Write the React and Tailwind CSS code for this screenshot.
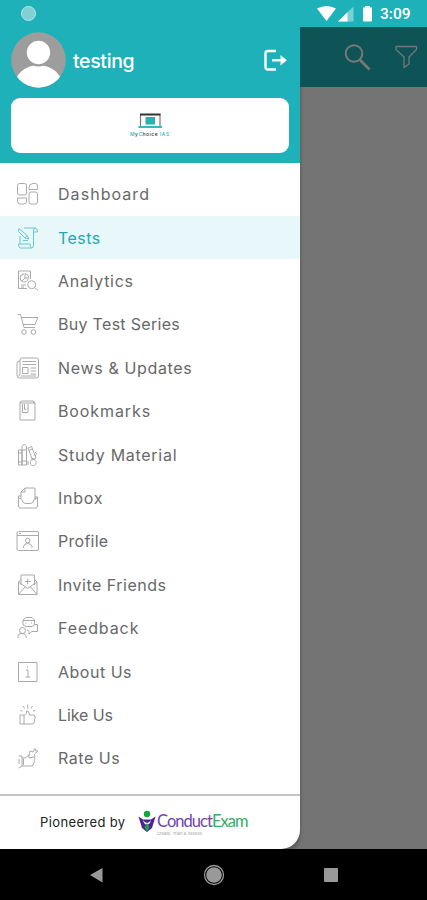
import React from "react";

const icons = {
  dashboard: (
    <>
      <rect x="1.5" y="1.5" width="9" height="11.5" rx="2" />
      <path d="M13 7.5V5.5Q13 1.5 17 1.5H19.5Q21.500 1.5 21.5 4V7.5Z" />
      <rect x="13" y="10" width="8.5" height="12" rx="2" />
      <path d="M1.5 16H10.5V19Q10.5 22 7.5 22H4Q1.5 22 1.5 19Z" />
    </>
  ),
  tests: (
    <>
      <path d="M8 2H19Q21.5 2 21.5 6H17.5V19.5Q17.5 22 15 22H4.5Q2.5 22 2.5 18H14Q14 22 15.5 22M17.5 6V4Q17.5 2 19.5 2" />
      <path d="M3 2.5L11 9.5L13 13L9 12L2.5 5.5ZM4 18V10M7 14.5H12M11 9.5L9 12" />
    </>
  ),
  analytics: (
    <>
      <path d="M11 19.5H2.5V2H14.5V10M5 16H10M5 18H8" />
      <path d="M8 5A4 4 0 1 0 12 10M9 4.5V9H13Q12.5 5 9 4.5M6 12L9 9" />
      <circle cx="15.7" cy="15.7" r="4" />
      <path d="M18.7 18.7L22 21.5" />
    </>
  ),
  cart: (
    <>
      <path d="M1.5 2.5H4.5L8 15.5H19M5.3 5.5H22L19 12.5H7.2" />
      <circle cx="8" cy="20" r="2.3" />
      <circle cx="17.5" cy="20" r="2.3" />
    </>
  ),
  news: (
    <>
      <path d="M4 5V4Q4 2 6 2H20.5Q22.5 2 22.5 4V20Q22.5 22 20.5 22H3.5Q1 22 1 19V7Q1 5 4 5V18Q4 20 2.5 20" />
      <path d="M6.5 5.5H20M6.5 8.5H20M6.5 11.5H12V17.5H6.5ZM14.5 12H20M14.5 15H20M14.5 18H20M5 20H20" />
    </>
  ),
  bookmark: (
    <>
      <path d="M4 4Q4 2 6 2H17.5L19 4V21H4ZM4 4H19M17.5 2V4" />
      <path d="M6.500 5V13.500H12V5M8.500 5V10.500H10" />
    </>
  ),
  study: (
    <>
      <path d="M2.5 7H6V22H2.5ZM6 3.5Q8 0 10.5 3V22H6ZM2.5 10H6M2.5 19H6M6 7H10.5M6 18H10.5" />
      <path d="M12 5L15.5 3.5L20 15L16.5 17ZM13 7.5L16.5 6" />
      <path d="M19 9Q22 10 19 13M14.5 18.5A3 3 0 1 0 20 18.5L17 15ZM12 18V22" />
    </>
  ),
  inbox: (
    <>
      <path d="M5 12V6L9 2H19V14M5 6H9V2M5 10H2.5V20Q2.5 22 4.5 22H19.5Q21.5 22 21.5 20V11H19" />
      <path d="M2.5 12Q6 12 6.5 15Q7 17.5 10 17.5H14Q17 17.5 17.5 15Q18 12 21.5 12" />
    </>
  ),
  profile: (
    <>
      <rect x="1" y="2.5" width="21.5" height="19" rx="1.5" />
      <path d="M1 6.5H22.5M3 4.5H5" />
      <circle cx="11.7" cy="11.5" r="2.3" />
      <path d="M7.5 19V17.5Q8 14.5 11.7 14.5Q15.5 14.5 16 17.5V19" />
    </>
  ),
  invite: (
    <>
      <path d="M5 12V2H18.5V12M5 6.5L2.5 9V21.5H21V9L18.5 6.5M2.5 9L11.7 15.5L21 9M2.5 21.5L9 14M21 21.5L14.5 14" />
      <path d="M9 8.5H14.5M11.7 5.8V11.2" />
    </>
  ),
  feedback: (
    <>
      <path d="M7 9V4L10 1.5H16L18.5 4V9L16 10.5H10L7 9M7 4.5H18.5M10 6.5V7.5M15.5 6.5V7.5" />
      <path d="M18.5 8.5H21.5V15.5H16L13 18V15.5L11 14" />
      <circle cx="6.5" cy="14.5" r="3" />
      <path d="M2 22V20Q2 17.5 6 17.5Q10 17.5 10.5 22" />
    </>
  ),
  about: (
    <>
      <rect x="2.5" y="2.5" width="18.5" height="19" />
      <path d="M11.700 6V7.500M10 10H12V17M9.500 17H14.200" />
    </>
  ),
  like: (
    <>
      <path d="M4 12H8V21H4ZM8 12.5L10.5 10V8Q13 7 13.5 12H18Q19.5 12.5 19 15L18 20Q17.5 21 16 21H8" />
      <path d="M11.700 1.500V5.500M7 3L8.500 5.500M16.500 3L15 5.500M4.500 7.500L6.500 8M19 7.500L17 8" />
    </>
  ),
  rate: (
    <>
      <path d="M2.5 10H6V20L2.5 22M6 12H9L13 9V12L18 11Q20 12 18 14Q19.5 15.5 17.5 17Q18 20 15 20H6" />
      <path d="M13 9L14 5L17 6L19 2.5L20 5L22 5L18.5 8L19 11M3 13V18M7.5 13V19" />
    </>
  ),
};

const items = [
  { label: "Dashboard", icon: "dashboard", tracking: "tracking-[1.05px]" },
  { label: "Tests", icon: "tests", tracking: "tracking-[0.47px]", active: true },
  { label: "Analytics", icon: "analytics", tracking: "tracking-[0.7px]" },
  { label: "Buy Test Series", icon: "cart", tracking: "tracking-[0.3px]" },
  { label: "News & Updates", icon: "news", tracking: "tracking-[0.65px]" },
  { label: "Bookmarks", icon: "bookmark", tracking: "tracking-[0.9px]" },
  { label: "Study Material", icon: "study", tracking: "tracking-[0.72px]" },
  { label: "Inbox", icon: "inbox", tracking: "tracking-[0.77px]" },
  { label: "Profile", icon: "profile", tracking: "tracking-[0.27px]" },
  { label: "Invite Friends", icon: "invite", tracking: "tracking-[0.5px]" },
  { label: "Feedback", icon: "feedback", tracking: "tracking-[0.9px]" },
  { label: "About Us", icon: "about", tracking: "tracking-[0.5px]" },
  { label: "Like Us", icon: "like", tracking: "tracking-[-0.1px]" },
  { label: "Rate Us", icon: "rate", tracking: "tracking-[0.55px]" },
];

function StatusBar() {
  return (
    <div className="flex h-[27px] shrink-0 items-center bg-[#1fb1b9] pl-[21px] pr-[16px]">
      <div className="h-[15px] w-[15px] rounded-full border border-[#b5e5e8] bg-[#82d0d4]" />
      <svg className="ml-auto" width="60" height="18" viewBox="0 0 60 18">
        <path d="M1 3.5Q10.500 -1.500 20 3.500L10.500 16Z" fill="#fff" />
        <path d="M37.500 1.500V16.500H22Z" fill="#79d0d5" />
        <path d="M31.500 7.300V16.500H22Z" fill="#fff" />
        <path d="M47 2.500H49V1H54V2.500H56V15.500Q56 16.500 55 16.500H48Q47 16.500 47 15.500Z" fill="#fff" />
      </svg>
      <span className="ml-[4px] w-[31px] whitespace-nowrap pt-px font-['Roboto',sans-serif] text-[15.500px] font-medium leading-[18px] text-white">3:09</span>
    </div>
  );
}

function DrawerHeader() {
  return (
    <div className="h-[136px] shrink-0 bg-[#1fb1b9] px-[11px] pt-[5px]">
      <div className="flex h-[56px] items-center">
        <svg width="55" height="56" viewBox="0 0 55 56">
          <defs>
            <clipPath id="avatar"><ellipse cx="27.500" cy="28" rx="27.300" ry="27.700" /></clipPath>
          </defs>
          <g clipPath="url(#avatar)">
            <rect width="55" height="56" fill="#9d9d9d" />
            <ellipse cx="27.500" cy="55.500" rx="24.500" ry="22.500" fill="#fff" />
            <circle cx="27.500" cy="21" r="13.500" fill="#9d9d9d" />
            <circle cx="27.500" cy="20.500" r="11.700" fill="#fff" />
          </g>
        </svg>
        <span className="ml-[7px] pt-[2px] text-[19.500px] font-medium leading-[24px] tracking-[-0.35px] text-white">testing</span>
        <svg className="ml-auto mr-px" width="24" height="24" viewBox="0 0 24 24" fill="none" stroke="#fff" strokeWidth="2.400">
          <path d="M12 3H4Q1.500 3 1.500 5.500V19Q1.500 21.500 4 21.500H12" />
          <path d="M8 12.200H18" />
          <path d="M16.500 7L22.800 12.200L16.500 17.500Z" fill="#fff" stroke="none" />
        </svg>
      </div>
      <div className="mt-[9.500px] flex h-[55.500px] flex-col items-center rounded-[9px] bg-white pt-[15px]">
        <svg className="ml-[2px]" width="25" height="16" viewBox="0 0 25 16">
          <path d="M2.500 13V1.500H22V13" fill="none" stroke="#777" strokeWidth="1.200" />
          <path d="M2 1.500H22.500" stroke="#333" strokeWidth="2" />
          <rect x="7.500" y="4" width="9.500" height="7.500" fill="#26b2b8" />
          <path d="M0.500 14H24" stroke="#32b9bd" strokeWidth="2" />
        </svg>
        <div className="mt-[2px] whitespace-nowrap text-[5px] font-medium leading-[7px] tracking-[0.500px] text-[#333]">
          <span className="text-[#26b2b8]">M</span>y<span className="text-[#26b2b8]">C</span>hoice <span className="text-[#26b2b8]">IAS</span>
        </div>
      </div>
    </div>
  );
}

function MenuItem({ item }) {
  return (
    <li className={item.active ? "flex h-[43.420px] items-center bg-[#e8f7f9] pl-[16px] text-[#1fa9b0]" : "flex h-[43.420px] items-center pl-[16px] text-[#686868]"}>
      <svg
        className={item.active ? "text-[#5cc1c8]" : "text-[#a0a0a0]"}
        width="24" height="24" viewBox="0 0 24 24" fill="none" stroke="currentColor" strokeWidth="0.900" strokeLinejoin="round"
      >
        {icons[item.icon]}
      </svg>
      <span className={"ml-[18px] whitespace-nowrap text-[16px] leading-[22px] " + item.tracking}>{item.label}</span>
    </li>
  );
}

function Footer() {
  return (
    <div className="mt-auto flex h-[55.500px] shrink-0 items-center border-t-2 border-[#c3c3c3] pl-[40px]">
      <span className="w-[98px] whitespace-nowrap text-[13px] leading-[18px] tracking-[0.380px] text-[#222]">Pioneered by</span>
      <svg width="18" height="25" viewBox="0 0 18 25">
        <circle cx="9" cy="4" r="3.200" fill="#16a63f" />
        <path d="M0.500 6.500L5 9.500H13L17.500 6.500L14 18L9 22L4 18Z" fill="#4c2192" />
        <path d="M5 10Q9 16 13 10L12 13L9 15.500L6 13Z" fill="#fff" />
        <path d="M9 13L11.500 17L9 22L6.500 17Z" fill="#22a04a" />
      </svg>
      <div className="ml-px flex flex-col pt-[2px]">
        <div className="whitespace-nowrap font-['Lato',sans-serif] text-[16.500px] leading-[20px] tracking-[-0.950px] text-[#7144ac]">
          Conduct<span className="text-[#35ae65]">Exam</span>
        </div>
        <span className="whitespace-nowrap text-[4px] leading-[5px] tracking-[0.100px] text-[#999]">Create, Train &amp; Assess</span>
      </div>
    </div>
  );
}

function Drawer() {
  return (
    <aside className="flex w-[299.500px] shrink-0 flex-col overflow-hidden rounded-br-[19px] bg-white shadow-[1px_4px_3px_rgba(0,0,0,0.2)]">
      <DrawerHeader />
      <ul className="pt-[9.500px]">
        {items.map((item) => <MenuItem key={item.label} item={item} />)}
      </ul>
      <Footer />
    </aside>
  );
}

function NavigationBar() {
  return (
    <div className="z-10 flex h-[51px] shrink-0 items-center bg-black pl-[89px]">
      <svg width="14" height="16" viewBox="0 0 14 16"><path d="M1 8L13.500 1V15.500Z" fill="#999" /></svg>
      <svg className="ml-[100px]" width="22" height="22" viewBox="0 0 22 22">
        <circle cx="11" cy="11" r="9.500" fill="none" stroke="#999" strokeWidth="1.300" />
        <circle cx="11" cy="11" r="7.800" fill="#999" />
      </svg>
      <div className="ml-[99px] h-[14px] w-[14px] rounded-[1px] bg-[#999]" />
    </div>
  );
}

export default function App() {
  return (
    <div className="flex h-[900px] w-[427px] flex-col overflow-hidden bg-[#747474] font-['Inter',sans-serif]">
      <StatusBar />
      <main className="flex h-[822px] shrink-0">
        <Drawer />
        <section className="flex-1">
          <div className="flex h-[60px] items-center bg-[#0e5356] pl-[44.500px]">
            <svg width="27" height="28" viewBox="0 0 27 28" fill="none" stroke="#7a7777">
              <circle cx="10" cy="10.500" r="8.300" strokeWidth="2" />
              <path d="M16 17L25.500 26.500" strokeWidth="2.700" />
            </svg>
            <svg className="ml-[24px] shrink-0" width="23" height="24" viewBox="0 0 23 24" fill="none" stroke="#737878" strokeWidth="1.300" strokeLinejoin="round">
              <path d="M1 1.500H21.500V4.500L14 12V19L9 22.500V12L1 4.500Z" />
            </svg>
          </div>
        </section>
      </main>
      <NavigationBar />
    </div>
  );
}
